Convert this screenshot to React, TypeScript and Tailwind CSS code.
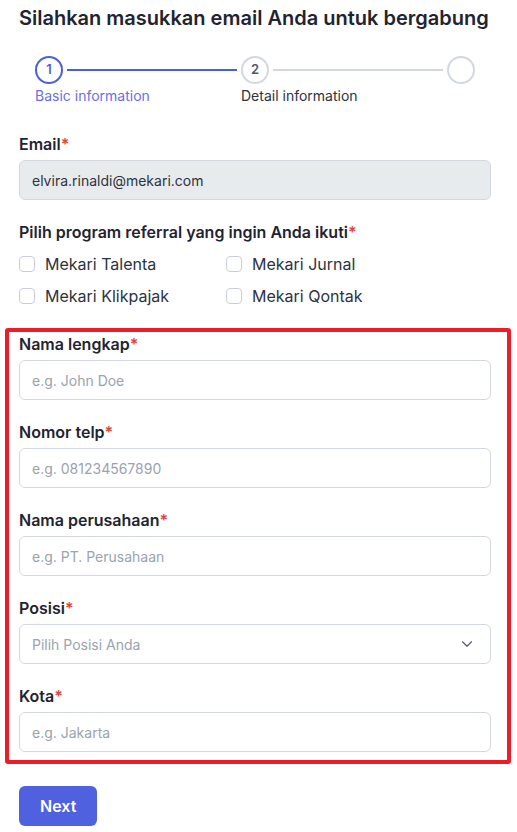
import { ChevronDown } from "lucide-react";

const programs = [
  "Mekari Talenta",
  "Mekari Jurnal",
  "Mekari Klikpajak",
  "Mekari Qontak",
] as const;

const fields = [
  { label: "Nama lengkap", placeholder: "e.g. John Doe" },
  { label: "Nomor telp", placeholder: "e.g. 081234567890" },
  { label: "Nama perusahaan", placeholder: "e.g. PT. Perusahaan" },
] as const;

function Label({ children }: { children: React.ReactNode }) {
  return (
    <p className="text-[16px] leading-6 font-semibold text-[#1f2430]">
      {children}
      <span className="text-[#d9463b]">*</span>
    </p>
  );
}

function TextInput({ placeholder }: { placeholder: string }) {
  return (
    <input
      placeholder={placeholder}
      className="mt-1 h-10 w-full rounded-md border border-[#d3d8e0] bg-white px-3 text-[14px] text-[#1f2430] outline-none placeholder:text-[#9aa3ae]"
    />
  );
}

export default function App() {
  return (
    <div
      className="min-h-dvh bg-white pl-[19px] pr-[26px] pt-[4px]"
      style={{ fontFamily: "Inter, 'Noto Sans', sans-serif" }}
    >
      <h1 className="text-[20px] leading-7 font-semibold text-[#1f2430]">
        Silahkan masukkan email Anda untuk bergabung
      </h1>

      {/* stepper */}
      <div className="mt-6 pl-4 pr-4">
        <div className="flex items-center">
          <span className="flex h-7 w-7 shrink-0 items-center justify-center rounded-full border-2 border-[#4b5fdc] text-[13px] font-semibold text-[#4b5fdc]">
            1
          </span>
          <span className="mx-1 h-[2px] flex-1 bg-[#4b5fdc]" />
          <span className="flex h-7 w-7 shrink-0 items-center justify-center rounded-full border-2 border-[#d3d8e0] text-[13px] font-semibold text-[#4f5868]">
            2
          </span>
          <span className="mx-1 h-[2px] flex-1 bg-[#d3d8e0]" />
          <span className="h-7 w-7 shrink-0 rounded-full border-2 border-[#d3d8e0]" />
        </div>
        <div className="mt-[2px] flex text-[14px] leading-5">
          <span className="w-[206px] text-[#6c6fe2]">Basic information</span>
          <span className="text-[#2d3340]">Detail information</span>
        </div>
      </div>

      <div className="mt-[26px]">
        <Label>Email</Label>
        <div className="mt-1 flex h-10 items-center rounded-md border border-[#d3d8e0] bg-[#e8ebee] px-3 text-[14px] text-[#2d3340]">
          elvira.rinaldi@mekari.com
        </div>
      </div>

      <div className="mt-5">
        <Label>Pilih program referral yang ingin Anda ikuti</Label>
        <div className="mt-1 grid w-[400px] grid-cols-[207px_1fr]">
          {programs.map((p) => (
            <label key={p} className="flex h-8 items-center gap-[10px]">
              <span className="h-4 w-4 rounded border border-[#c9ced6] bg-white" />
              <span className="text-[16px] text-[#2d3340]">{p}</span>
            </label>
          ))}
        </div>
      </div>

      <div className="mt-[16px] ml-[-14px] mr-[-20px] rounded-[3px] border-4 border-[#ee1d25] pl-[10px] pr-[16px] pt-0 pb-[8px]">
        {fields.map((f) => (
          <div key={f.label} className="mb-[20px]">
            <Label>{f.label}</Label>
            <TextInput placeholder={f.placeholder} />
          </div>
        ))}
        <div className="mb-[20px]">
          <Label>Posisi</Label>
          <div className="mt-1 flex h-10 items-center justify-between rounded-md border border-[#d3d8e0] bg-white pl-3 pr-[14px] text-[14px] text-[#9aa3ae]">
            Pilih Posisi Anda
            <ChevronDown size={18} strokeWidth={1.5} className="text-[#4f5868]" />
          </div>
        </div>
        <div>
          <Label>Kota</Label>
          <TextInput placeholder="e.g. Jakarta" />
        </div>
      </div>

      <button className="mt-[22px] h-10 rounded-md bg-[#4f61df] px-[21px] text-[16px] font-semibold text-white">
        Next
      </button>
    </div>
  );
}
